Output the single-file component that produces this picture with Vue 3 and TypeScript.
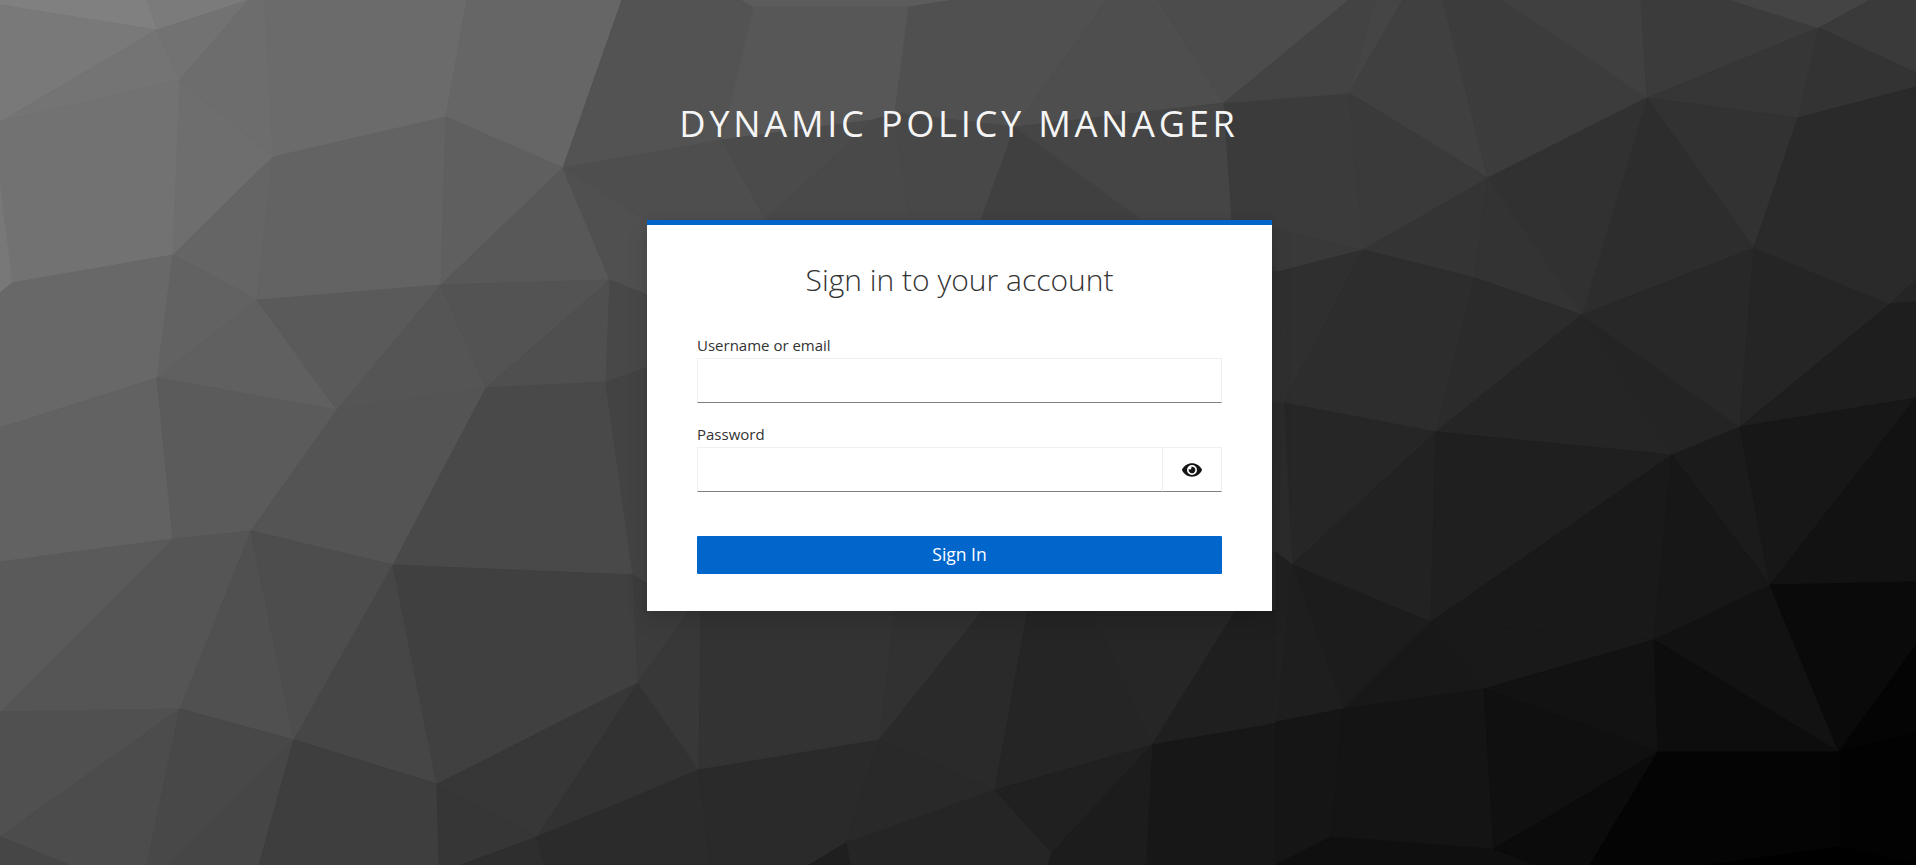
<script setup lang="ts">
const P: Record<string, string> = {
  A: '157,30', B: '180,80', C: '273,157', F: '446,117', G: '563,168', J: '173,255', K: '12,283', L: '257,300',
  M: '441,285', N: '610,280', O: '157,378', Q: '486,388', R: '606,382', PP: '337,410',
  V1: '173,539', V2: '251,531', V3: '393,565', V4: '633,575', V5: '180,709', V6: '294,740', V7: '437,784', V8: '638,683', V9: '537,837',
  A1: '699,770', A2: '879,740', A3: '995,790', A4: '1152,745', A5: '846,843', A6: '1052,853',
  a: '1349,93', b: '1488,178', c: '1647,98', d: '1819,28', e: '1363,250', f: '1278,272', g: '1475,278', h: '1582,315',
  i: '1754,248', j: '1798,118', k: '1890,304', l: '1284,403', m: '1436,432', n: '1740,427', s: '1672,455',
  q: '1292,565', r: '1431,622', t: '1654,640', u: '1770,585', v: '1484,689', w: '1343,709', x: '1276,722', y: '1839,752',
  z: '1658,752', aa: '1331,837', bb: '1494,849', cc: '1839,847',
}

const facets: [string, number][] = [
  ['0,0 1916,0 1916,865 0,865', 0x30],
  // upper left
  ['0,0 147,0 A 0,5', 0x80], ['147,0 249,0 A', 0x7b], ['0,5 A 0,122', 0x79], ['0,122 A B', 0x74], ['A 249,0 B', 0x72],
  ['249,0 265,0 C B', 0x6d], ['265,0 467,0 F C', 0x6b], ['467,0 622,0 G F', 0x66], ['622,0 742,0 754,7 722,140 G', 0x53],
  ['0,122 B J K 0,187', 0x72], ['0,187 K 0,293', 0x78], ['B C J', 0x6e], ['C L J', 0x65], ['C F M L', 0x63], ['F G M', 0x5f], ['G N M', 0x58],
  ['G 722,140 766,220 660,230', 0x4e], ['G 660,230 660,300 N', 0x50], ['K J O 0,428 0,293', 0x68], ['J L O', 0x62], ['L PP O', 0x60],
  ['L M PP', 0x5a], ['M Q PP', 0x55], ['M N Q', 0x53], ['N R Q', 0x4f], ['N 660,300 660,363 R', 0x48],
  // lower left
  ['0,428 O V1 0,562', 0x62], ['O PP V2 V1', 0x5b], ['PP Q V3 V2', 0x54], ['Q R V4 V3', 0x49], ['R 660,363 689,610 V4', 0x43],
  ['0,562 V1 0,712', 0x5a], ['V1 V5 0,712', 0x55], ['V1 V2 V5', 0x55], ['V2 V6 V5', 0x50], ['V2 V3 V6', 0x4d], ['V3 V7 V6', 0x46],
  ['V3 V4 V8 V7', 0x40], ['V4 689,610 V8', 0x3c], ['0,712 V5 0,837', 0x50], ['0,837 V5 147,865 69,865', 0x4c], ['0,837 69,865 0,865', 0x46],
  ['V5 V6 169,865 147,865', 0x48], ['V6 259,865 169,865', 0x46], ['V6 V7 439,865 259,865', 0x3e], ['V7 V9 461,865 439,865', 0x36],
  ['V7 V8 V9', 0x37], ['V8 A1 V9', 0x32], ['V9 545,865 461,865', 0x2e], ['V9 A1 711,865 545,865', 0x2b],
  // top centre
  ['742,0 954,0 909,7 754,7', 0x5c], ['754,7 909,7 895,113 873,120 722,140', 0x57], ['909,7 954,0 1107,0 1015,127 895,113', 0x50],
  ['1107,0 1158,0 1224,103 1015,127', 0x4e], ['1158,0 1349,0 1224,103', 0x4c],
  ['722,140 873,120 766,220', 0x4b], ['873,120 895,113 909,220 766,220', 0x49], ['895,113 1015,127 981,220 909,220', 0x48],
  ['1015,127 1142,220 981,220', 0x40], ['1015,127 1224,103 1232,220 1142,220', 0x45],
  ['1224,103 a e 1232,220', 0x3b], ['1232,220 e f', 0x39], ['1232,220 f 1232,272', 0x36], ['1232,272 f l 1232,403', 0x2f],
  ['1232,403 l 1276,552 1232,552', 0x2b], ['1232,552 1276,552 1280,610 1236,610', 0x26],
  // bottom centre
  ['689,610 701,610 A1 V8', 0x38], ['701,610 895,610 A2 A1', 0x33], ['895,610 983,610 A2', 0x31], ['983,610 1028,610 A3 A2', 0x2a],
  ['1028,610 1093,610 A4 A3', 0x25], ['1093,610 1236,610 A4', 0x26], ['1236,610 1280,610 1280,723 A4', 0x1f], ['A4 1280,723 1280,865 1146,865', 0x17],
  ['A1 A2 A5 809,865 711,865', 0x2a], ['A2 A3 A5', 0x29], ['A3 A6 1048,865 850,865 A5', 0x25], ['A5 850,865 809,865', 0x1f],
  ['A3 A4 A6', 0x20], ['A6 A4 1146,865 1048,865', 0x1c],
  // upper right
  ['1224,103 1349,0 1376,0 a', 0x43], ['1376,0 1403,0 a', 0x45], ['1403,0 1443,0 b a', 0x40],
  ['1443,0 1503,0 c b', 0x3c], ['1503,0 1641,0 c', 0x40], ['1641,0 1731,0 d c', 0x3b], ['1731,0 1870,0 d', 0x44], ['1870,0 1916,0 1916,73 d', 0x3a],
  ['c d j', 0x36], ['d 1916,73 1916,87 j', 0x33], ['c j i', 0x32], ['c i h', 0x2d], ['b c h', 0x31], ['a b e', 0x3a],
  ['e b g', 0x34], ['b g h', 0x33], ['f e l', 0x2f], ['e g m l', 0x2d], ['g h m', 0x2b], ['m h s', 0x25], ['h n s', 0x24], ['h i n', 0x28],
  ['i k n', 0x25], ['i j 1916,87 1916,280 k', 0x2a], ['1916,280 1916,302 k', 0x25], ['k 1916,302 1916,398 n', 0x1e],
  // lower right
  ['s n u', 0x1b], ['n 1916,398 u', 0x17], ['u 1916,398 1916,582', 0x12], ['l m q', 0x26], ['l q 1276,552', 0x2b], ['m r q', 0x22], ['m s r', 0x1f],
  ['r s t', 0x19], ['s u t', 0x17], ['r t v', 0x19], ['q r w', 0x1c], ['q w x', 0x1e], ['1276,552 q x', 0x20], ['r v w', 0x18], ['w v bb aa', 0x14],
  ['x w aa 1276,865', 0x15], ['aa bb 1537,865 1276,865', 0x0f], ['v t z', 0x12], ['v z bb', 0x10], ['bb z 1590,865 1537,865', 0x0b],
  ['t u y', 0x12], ['t y z', 0x0d], ['u 1916,582 1916,645 y', 0x0a], ['y 1916,645 1916,734', 0x04], ['y 1916,734 1916,865 cc', 0x02],
  ['z y cc 1709,865 1590,865', 0x04], ['cc 1916,865 1709,865', 0x00],
]

const polygons = facets.map(([ring, grey]) => ({
  points: ring.split(' ').map((token) => P[token] ?? token).join(' '),
  colour: `rgb(${grey},${grey},${grey})`,
}))
</script>

<template>
  <div class="page">
    <svg class="backdrop" viewBox="0 0 1916 865" width="1916" height="865" aria-hidden="true">
      <polygon v-for="(poly, index) in polygons" :key="index" :points="poly.points" :fill="poly.colour" :stroke="poly.colour" />
    </svg>
    <main class="shell">
      <h1 class="brand">Dynamic Policy Manager</h1>
      <section class="card">
        <h2 class="title">Sign in to your account</h2>
        <form class="form" @submit.prevent>
          <div class="field">
            <label class="label" for="username">Username or email</label>
            <input id="username" class="control" type="text" />
          </div>
          <div class="field">
            <label class="label" for="password">Password</label>
            <div class="group">
              <input id="password" class="control grow" type="password" />
              <button class="toggle" type="button" aria-label="Show password">
                <svg class="eye" viewBox="0 0 576 512" width="20" height="18">
                  <path fill="#151515" d="M572.52 241.4C518.29 135.59 410.93 64 288 64S57.68 135.64 3.48 241.41a32.35 32.35 0 0 0 0 29.19C57.71 376.41 165.07 448 288 448s230.32-71.64 284.52-177.41a32.35 32.35 0 0 0 0-29.19zM288 400a144 144 0 1 1 144-144 143.93 143.93 0 0 1-144 144zm0-240a95.31 95.31 0 0 0-25.31 3.79 47.85 47.85 0 0 1-66.9 66.9A95.78 95.78 0 1 0 288 160z" />
                </svg>
              </button>
            </div>
          </div>
          <button class="submit" type="submit">Sign In</button>
        </form>
      </section>
    </main>
  </div>
</template>

<style>
html,
body {
  margin: 0;
  background: #303030;
}
</style>

<style scoped>
.page {
  position: relative;
  width: 1916px;
  height: 865px;
  overflow: hidden;
  font-family: "Open Sans", "Noto Sans", sans-serif;
}
.backdrop {
  position: absolute;
  top: 0;
  left: 0;
  display: block;
}
.shell {
  position: relative;
  display: flex;
  flex-direction: column;
  align-items: center;
}
.brand {
  margin: 0 0 0 2px;
  padding: 102px 0 0;
  height: 118px;
  box-sizing: content-box;
  font-size: 36.25px;
  line-height: 43px;
  font-weight: 400;
  letter-spacing: 3.7px;
  text-transform: uppercase;
  color: #f5f5f5;
  white-space: nowrap;
}
.card {
  width: 625px;
  margin-left: 3px;
  box-sizing: border-box;
  padding: 37px 50px 37px;
  background: #fff;
  border-top: 5px solid #06c;
  box-shadow: 0 10px 20px rgba(3, 3, 3, 0.12), 0 0 7px rgba(3, 3, 3, 0.06);
}
.title {
  margin: 0 0 36px;
  font-size: 30px;
  line-height: 36px;
  font-weight: 300;
  text-align: center;
  color: #333;
}
.form {
  display: flex;
  flex-direction: column;
}
.field {
  display: flex;
  flex-direction: column;
  margin-bottom: 20px;
}
.label {
  margin-bottom: 2px;
  font-size: 15px;
  line-height: 22px;
  color: #333;
}
.control {
  display: block;
  box-sizing: border-box;
  width: 100%;
  height: 45px;
  margin: 0;
  padding: 0 10px;
  background: #fff;
  border: 1px solid #f0f0f0;
  border-bottom-color: #7f7f7f;
  border-radius: 0;
  outline: none;
}
.group {
  display: flex;
}
.grow {
  flex: 1;
  min-width: 0;
}
.toggle {
  display: flex;
  align-items: center;
  justify-content: center;
  width: 59px;
  height: 45px;
  padding: 0;
  background: #fff;
  border: 1px solid #f0f0f0;
  border-bottom-color: #7f7f7f;
  border-left: 0;
  border-radius: 0;
}
.submit {
  height: 38px;
  margin-top: 24px;
  padding: 0 0 2px;
  background: #06c;
  border: 0;
  border-radius: 1px;
  color: #fff;
  font-family: inherit;
  font-size: 17.5px;
}
</style>
